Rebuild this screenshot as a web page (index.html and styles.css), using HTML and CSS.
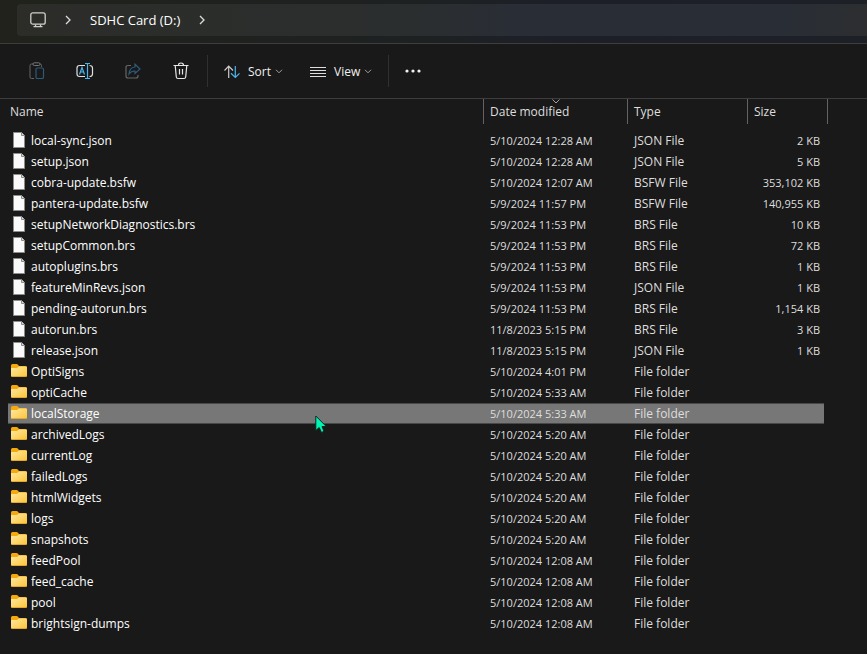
FILE: index.html
```
<!DOCTYPE html>
<html lang="en">

<head>
    <meta charset="UTF-8">
    <meta name="viewport" content="width=device-width, initial-scale=1.0">
    <title>SDHC Card (D:)</title>
    <link rel="stylesheet" href="styles.css">
</head>

<body>
    <!-- shared row icons -->
    <svg class="sprite" aria-hidden="true">
        <defs>
            <linearGradient id="folder-fill" x1="0" y1="0" x2="1" y2="1">
                <stop offset="0" stop-color="#ffe9a2" />
                <stop offset="1" stop-color="#fdc436" />
            </linearGradient>
        </defs>
        <symbol id="file" viewBox="0 0 16 16">
            <path d="M2.5 .5h8l3 3v12h-11z" fill="#fafafa" stroke="#8c8c8c" />
            <path d="M10.5 .5v3h3" fill="#d8d8d8" stroke="#8c8c8c" />
        </symbol>
        <symbol id="folder" viewBox="0 0 16 16">
            <path d="M0 2.5Q0 1 1.5 1H5.500Q6.500 1 7 1.800L8 3H14.500Q16 3 16 4.500V8H0z" fill="#f5a90c" />
            <path d="M0 5.500Q0 5 .8 5H6L8 3.500H15Q16 3.500 16 4.500V12.500Q16 14 14.500 14H1.500Q0 14 0 12.500z" fill="url(#folder-fill)" />
            <path d="M.5 13.500H15.500" stroke="#d9981e" stroke-width=".7" />
        </symbol>
    </svg>

    <header class="address">
        <nav class="path" aria-label="Address">
            <button class="crumb crumb-pc" aria-label="This PC">
                <svg width="16" height="16" viewBox="0 0 16 16" fill="none" stroke="#cfcfca" stroke-width="1.300">
                    <rect x=".8" y=".8" width="14.400" height="11.400" rx="2" />
                    <path d="M5.500 12.500v2M10.500 12.500v2M3.500 14.700h9" />
                </svg>
            </button>
            <svg class="sep" width="6" height="10" viewBox="0 0 6 10"><path d="M1 1l4 4-4 4" /></svg>
            <button class="crumb">SDHC Card (D:)</button>
            <svg class="sep" width="6" height="10" viewBox="0 0 6 10"><path d="M1 1l4 4-4 4" /></svg>
        </nav>
    </header>

    <div class="toolbar" role="toolbar">
        <div class="group icons">
            <button class="tool" aria-label="Paste" disabled>
                <svg width="16" height="18" viewBox="0 0 16 18" fill="none">
                    <path d="M5 16.500H2.500Q1 16.500 1 15V3.500Q1 2 2.500 2H4M11 2Q12.500 2 12.500 3.500V5" stroke="#666" />
                    <rect x="4" y=".8" width="7" height="2.700" rx="1.300" stroke="#777" />
                    <rect x="7" y="6" width="7.500" height="10.500" rx="1.300" stroke="#2c5b78" stroke-width="1.200" />
                </svg>
            </button>
            <button class="tool" aria-label="Rename">
                <svg width="18" height="18" viewBox="0 0 18 18" fill="none" stroke-width="1.200">
                    <path d="M9 14.500H3.500Q1 14.500 1 12V6Q1 3.500 3.500 3.500H9M13.500 3.500Q16.500 3.500 16.500 6V12Q16.500 14.500 13.500 14.500" stroke="#e0e0e0" />
                    <path d="M3.500 12.500L6 5.500L8.500 12.500M4.500 10H7.500M11.500 1.500V16.500M9 1.500H14M9 16.500H14" stroke="#4cb4ec" />
                </svg>
            </button>
            <button class="tool" aria-label="Share" disabled>
                <svg width="16" height="16" viewBox="0 0 16 16" fill="none">
                    <path d="M6 2.500H3Q1 2.500 1 4.500V13Q1 15 3 15H11Q13 15 13 13V12" stroke="#666" stroke-width="1.200" />
                    <path d="M10 1.200L15 6L10 10.500V8Q6 8 4 11Q4.500 4.500 10 4z" stroke="#2c5b78" stroke-width="1.200" />
                </svg>
            </button>
            <button class="tool" aria-label="Delete">
                <svg width="16" height="18" viewBox="0 0 16 18" fill="none" stroke="#e6e6e6" stroke-width="1.200">
                    <path d="M.5 3.500H15.500M5.500 3.200Q5.500 1 8 1T10.500 3.200M2.200 3.500L3.300 15Q3.500 16.500 5 16.500H11Q12.500 16.500 12.700 15L13.800 3.500M6.500 7V12.500M9.500 7V12.500" />
                </svg>
            </button>
        </div>
        <div class="group menus">
            <button class="menu">
                <svg width="16" height="14" viewBox="0 0 16 14" fill="none" stroke-width="1.200">
                    <path d="M4.700 13V1.200M.5 5.500L4.700 1.200L9 5.500" stroke="#ccc" />
                    <path d="M11.300 1V12.500M7 8.300L11.300 12.500L15.500 8.300" stroke="#4cb4ec" />
                </svg>
                Sort
                <svg class="caret" width="8" height="5" viewBox="0 0 8 5"><path d="M1 .8L4 3.800L7 .8" /></svg>
            </button>
            <button class="menu">
                <svg width="16" height="12" viewBox="0 0 16 12" stroke="#ddd">
                    <path d="M0 1.500H16M0 4.500H16M0 7.500H16M0 10.500H16" />
                </svg>
                View
                <svg class="caret" width="8" height="5" viewBox="0 0 8 5"><path d="M1 .8L4 3.800L7 .8" /></svg>
            </button>
        </div>
        <button class="more" aria-label="See more">
            <svg width="16" height="4" viewBox="0 0 16 4" fill="#f2f2f2">
                <circle cx="2" cy="2" r="1.600" /><circle cx="8" cy="2" r="1.600" /><circle cx="14" cy="2" r="1.600" />
            </svg>
        </button>
    </div>

    <main>
        <table class="files">
            <thead>
                <tr>
                    <th class="name">Name</th>
                    <th class="date">Date modified<svg class="sorted" width="8" height="5" viewBox="0 0 8 5"><path d="M.5 .5L4 4L7.500 .5" /></svg></th>
                    <th class="type">Type</th>
                    <th class="size">Size</th>
                </tr>
            </thead>
            <tbody>
                <tr><td><svg class="icon"><use href="#file" /></svg>local-sync.json</td><td>5/10/2024 12:28 AM</td><td>JSON File</td><td>2 KB</td></tr>
                <tr><td><svg class="icon"><use href="#file" /></svg>setup.json</td><td>5/10/2024 12:28 AM</td><td>JSON File</td><td>5 KB</td></tr>
                <tr><td><svg class="icon"><use href="#file" /></svg>cobra-update.bsfw</td><td>5/10/2024 12:07 AM</td><td>BSFW File</td><td>353,102 KB</td></tr>
                <tr><td><svg class="icon"><use href="#file" /></svg>pantera-update.bsfw</td><td>5/9/2024 11:57 PM</td><td>BSFW File</td><td>140,955 KB</td></tr>
                <tr><td><svg class="icon"><use href="#file" /></svg>setupNetworkDiagnostics.brs</td><td>5/9/2024 11:53 PM</td><td>BRS File</td><td>10 KB</td></tr>
                <tr><td><svg class="icon"><use href="#file" /></svg>setupCommon.brs</td><td>5/9/2024 11:53 PM</td><td>BRS File</td><td>72 KB</td></tr>
                <tr><td><svg class="icon"><use href="#file" /></svg>autoplugins.brs</td><td>5/9/2024 11:53 PM</td><td>BRS File</td><td>1 KB</td></tr>
                <tr><td><svg class="icon"><use href="#file" /></svg>featureMinRevs.json</td><td>5/9/2024 11:53 PM</td><td>JSON File</td><td>1 KB</td></tr>
                <tr><td><svg class="icon"><use href="#file" /></svg>pending-autorun.brs</td><td>5/9/2024 11:53 PM</td><td>BRS File</td><td>1,154 KB</td></tr>
                <tr><td><svg class="icon"><use href="#file" /></svg>autorun.brs</td><td>11/8/2023 5:15 PM</td><td>BRS File</td><td>3 KB</td></tr>
                <tr><td><svg class="icon"><use href="#file" /></svg>release.json</td><td>11/8/2023 5:15 PM</td><td>JSON File</td><td>1 KB</td></tr>
                <tr><td><svg class="icon"><use href="#folder" /></svg>OptiSigns</td><td>5/10/2024 4:01 PM</td><td>File folder</td><td></td></tr>
                <tr><td><svg class="icon"><use href="#folder" /></svg>optiCache</td><td>5/10/2024 5:33 AM</td><td>File folder</td><td></td></tr>
                <tr class="selected"><td><svg class="icon"><use href="#folder" /></svg>localStorage<svg class="cursor" width="12" height="19" viewBox="0 0 12 19"><path d="M.8 1V15.500L4.200 12.500L6.500 17.500L9 16.300L7 11.500H11.300z" /></svg></td><td>5/10/2024 5:33 AM</td><td>File folder</td><td></td></tr>
                <tr><td><svg class="icon"><use href="#folder" /></svg>archivedLogs</td><td>5/10/2024 5:20 AM</td><td>File folder</td><td></td></tr>
                <tr><td><svg class="icon"><use href="#folder" /></svg>currentLog</td><td>5/10/2024 5:20 AM</td><td>File folder</td><td></td></tr>
                <tr><td><svg class="icon"><use href="#folder" /></svg>failedLogs</td><td>5/10/2024 5:20 AM</td><td>File folder</td><td></td></tr>
                <tr><td><svg class="icon"><use href="#folder" /></svg>htmlWidgets</td><td>5/10/2024 5:20 AM</td><td>File folder</td><td></td></tr>
                <tr><td><svg class="icon"><use href="#folder" /></svg>logs</td><td>5/10/2024 5:20 AM</td><td>File folder</td><td></td></tr>
                <tr><td><svg class="icon"><use href="#folder" /></svg>snapshots</td><td>5/10/2024 5:20 AM</td><td>File folder</td><td></td></tr>
                <tr><td><svg class="icon"><use href="#folder" /></svg>feedPool</td><td>5/10/2024 12:08 AM</td><td>File folder</td><td></td></tr>
                <tr><td><svg class="icon"><use href="#folder" /></svg>feed_cache</td><td>5/10/2024 12:08 AM</td><td>File folder</td><td></td></tr>
                <tr><td><svg class="icon"><use href="#folder" /></svg>pool</td><td>5/10/2024 12:08 AM</td><td>File folder</td><td></td></tr>
                <tr><td><svg class="icon"><use href="#folder" /></svg>brightsign-dumps</td><td>5/10/2024 12:08 AM</td><td>File folder</td><td></td></tr>
            </tbody>
        </table>
    </main>
</body>

</html>
```
FILE: styles.css
```
body {
    background-color: rgb(25, 25, 25);
    color: rgb(240, 240, 240);
    font-family: "Segoe UI", "Open Sans", "Noto Sans", sans-serif;
    font-size: 12px;
    line-height: 16px;
    margin: 0;
}

button {
    align-items: center;
    background: none;
    border: none;
    color: inherit;
    display: flex;
    font: inherit;
    padding: 0;
}

svg {
    flex: none;
}

.sprite {
    height: 0;
    position: absolute;
    width: 0;
}

/* address bar */
.address {
    background: linear-gradient(90deg, rgb(32, 34, 27), rgb(30, 33, 34) 50%, rgb(28, 31, 40) 65%, rgb(29, 32, 39));
    border-bottom: rgb(61, 61, 61) 1px solid;
    padding: 4px 0 7px 17px;
}

.path {
    align-items: center;
    background: linear-gradient(90deg, rgb(44, 45, 41), rgb(43, 46, 46) 45%, rgb(41, 45, 54) 60%, rgb(41, 45, 53) 90%, rgb(44, 46, 48));
    border-radius: 4px 0 0 4px;
    display: flex;
    gap: 19px;
    height: 32px;
    padding-left: 13px;
}

.crumb {
    color: rgb(255, 255, 255);
    font-size: 13px;
}

.sep {
    fill: none;
    stroke: rgb(220, 220, 220);
    stroke-width: 1.3;
}

/* toolbar */
.toolbar {
    align-items: center;
    border-bottom: rgb(61, 61, 61) 1px solid;
    display: flex;
    height: 54px;
}

.group {
    align-items: center;
    border-right: rgb(48, 48, 48) 1px solid;
    box-sizing: border-box;
    display: flex;
    height: 32px;
}

.icons {
    padding: 0 2px 0 13px;
}

.tool {
    height: 32px;
    justify-content: center;
    width: 48px;
}

.menus {
    gap: 27px;
    padding: 0 16px;
}

.menu {
    gap: 8px;
    padding-top: 1px;
}

.caret,
.sorted {
    fill: none;
    stroke: rgb(160, 160, 160);
}

.caret {
    margin-left: -4px;
}

.more {
    padding: 8px 16px;
}

/* file list */
main {
    padding: 0 43px 24px 8px;
}

.files {
    border-collapse: separate;
    border-spacing: 0;
    table-layout: fixed;
    width: 100%;
}

th {
    box-sizing: border-box;
    color: rgb(222, 222, 222);
    font-weight: normal;
    height: 31px;
    padding: 0 0 5px 6px;
    position: relative;
    text-align: left;
}

th.name {
    padding-left: 2px;
}

.date {
    width: 144px;
}

.type {
    width: 120px;
}

.size {
    width: 76px;
}

/* column dividers */
.date::before,
.type::before,
.size::before,
.size::after {
    background-color: rgb(99, 99, 99);
    content: "";
    height: 25px;
    left: -1px;
    position: absolute;
    top: 0;
    width: 1px;
}

.size::after {
    left: auto;
    right: -4px;
}

.sorted {
    left: 50%;
    margin-left: -4px;
    position: absolute;
    top: 0;
}

td {
    color: rgb(222, 222, 222);
    height: 21px;
    padding: 0 0 0 6px;
    white-space: nowrap;
}

td:first-child {
    color: rgb(255, 255, 255);
    padding-left: 3px;
    position: relative;
}

/* dates and sizes */
td:nth-child(2n) {
    font-size: 11px;
}

td:last-child {
    padding: 0 4px 0 0;
    text-align: right;
}

.icon {
    height: 16px;
    margin-right: 4px;
    vertical-align: -3px;
    width: 16px;
}

.selected td {
    background-color: rgb(119, 119, 119);
    box-shadow: inset 0 1px rgb(72, 72, 72), inset 0 -1px rgb(72, 72, 72);
}

.selected td:first-child {
    border-radius: 1px 0 0 1px;
}

.selected td:last-child {
    border-radius: 0 1px 1px 0;
}

.cursor {
    fill: rgb(0, 245, 180);
    left: 307px;
    position: absolute;
    stroke: rgb(10, 40, 30);
    top: 12px;
    z-index: 1;
}
```
